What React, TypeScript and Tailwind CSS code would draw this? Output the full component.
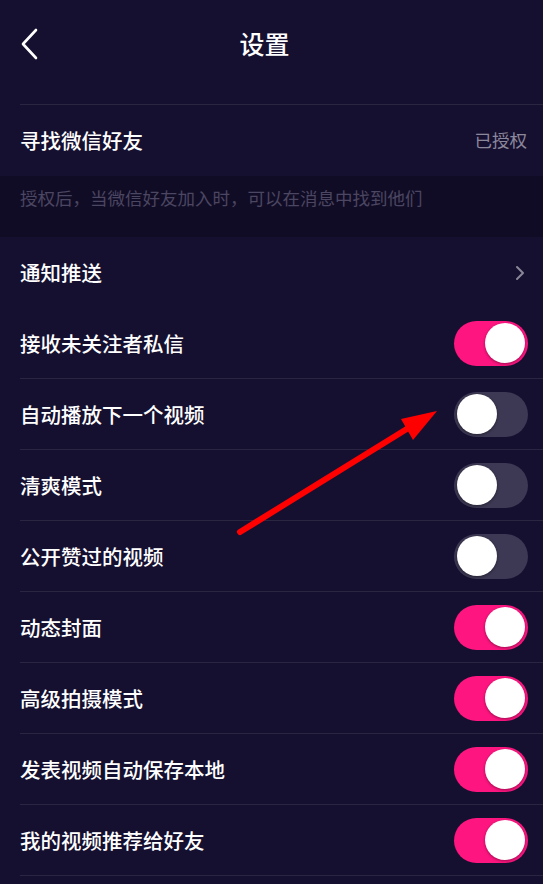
import React from "react";

const ROWS: { label: string; on: boolean }[] = [
  { label: "接收未关注者私信", on: true },
  { label: "自动播放下一个视频", on: false },
  { label: "清爽模式", on: false },
  { label: "公开赞过的视频", on: false },
  { label: "动态封面", on: true },
  { label: "高级拍摄模式", on: true },
  { label: "发表视频自动保存本地", on: true },
  { label: "我的视频推荐给好友", on: true },
];

function Toggle({ on }: { on: boolean }) {
  return (
    <div
      className={
        on
          ? "w-[74px] h-[45px] rounded-full bg-[#fe1580] flex items-center justify-end px-[3px]"
          : "w-[74px] h-[45px] rounded-full bg-[#3d3853] flex items-center justify-start px-[3px]"
      }
    >
      <div className="w-[40px] h-[40px] rounded-full bg-white shadow-[0_1px_3px_rgba(0,0,0,0.4)]" />
    </div>
  );
}

export default function App() {
  return (
    <div
      className="relative w-[543px] h-[884px] overflow-hidden bg-[#161030] text-white"
      style={{ fontFamily: '"Noto Sans CJK SC", "Noto Sans", sans-serif' }}
    >
      {/* header */}
      <div className="relative h-[104px] flex items-start justify-center pt-[26px]">
        <button className="absolute left-[20px] top-[28px] w-[20px] h-[32px]">
          <svg width="20" height="32" viewBox="0 0 20 32" fill="none">
            <path d="M16 2 L3 16 L16 30" stroke="white" strokeWidth="2.6" strokeLinecap="round" strokeLinejoin="round" />
          </svg>
        </button>
        <h1 className="mr-[14px] text-[25px] leading-[34px] font-medium">设置</h1>
      </div>

      <div className="ml-[20px] border-t border-[#2a2540]" />

      <div className="h-[71px] flex items-center justify-between pl-[20px] pr-[16px]">
        <span className="text-[20.5px] font-medium">寻找微信好友</span>
        <span className="text-[17.5px] text-[#8c889c]">已授权</span>
      </div>

      <div className="h-[61px] bg-[#110c25] flex items-center px-[20px] pb-[16px]">
        <span className="text-[17.5px] text-[#4b4662]">授权后，当微信好友加入时，可以在消息中找到他们</span>
      </div>

      <div className="h-[71px] flex items-center justify-between pl-[20px] pr-[18px]">
        <span className="text-[20.5px] font-medium">通知推送</span>
        <svg width="10" height="16" viewBox="0 0 10 16" fill="none">
          <path d="M2 2 L8 8 L2 14" stroke="#8a8699" strokeWidth="2" strokeLinecap="round" strokeLinejoin="round" />
        </svg>
      </div>

      {ROWS.map((r) => (
        <div key={r.label} className="ml-[20px] h-[71px] flex items-center justify-between pr-[15px] border-b border-[#2a2540]">
          <span className="text-[20.5px] font-medium">{r.label}</span>
          <Toggle on={r.on} />
        </div>
      ))}

      {/* annotation arrow */}
      <svg className="absolute left-0 top-0 pointer-events-none" width="543" height="884" viewBox="0 0 543 884">
        <line x1="240" y1="532" x2="410" y2="427" stroke="#ff0000" strokeWidth="6" strokeLinecap="round" />
        <polygon points="437,411 401,419 413,440" fill="#ff0000" />
      </svg>
    </div>
  );
}
